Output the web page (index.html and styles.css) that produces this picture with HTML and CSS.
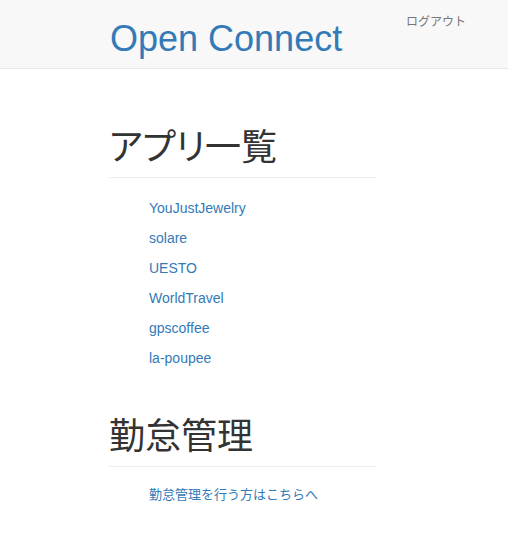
FILE: index.html
```html
<!DOCTYPE html>
<html lang="ja">
<head>
<meta charset="utf-8">
<title>Open Connect</title>
<link rel="stylesheet" href="styles.css">
</head>
<body>
<header class="navbar">
  <a class="brand" href="#">Open Connect</a>
  <a class="logout" href="#">ログアウト</a>
</header>
<main class="container">
  <section class="section">
    <h1 class="page-header kana">アプリ一覧</h1>
    <ul class="app-list">
      <li><a href="#">YouJustJewelry</a></li>
      <li><a href="#">solare</a></li>
      <li><a href="#">UESTO</a></li>
      <li><a href="#">WorldTravel</a></li>
      <li><a href="#">gpscoffee</a></li>
      <li><a href="#">la-poupee</a></li>
    </ul>
  </section>
  <section class="section second">
    <h1 class="page-header">勤怠管理</h1>
    <ul class="kintai-list">
      <li><a href="#">勤怠管理を行う方はこちらへ</a></li>
    </ul>
  </section>
</main>
</body>
</html>
```
FILE: styles.css
```css
* { box-sizing: border-box; }
html, body { margin: 0; padding: 0; background: #fff; }
body {
  font-family: "Liberation Sans", "Noto Sans CJK JP", sans-serif;
  font-size: 14px;
  line-height: 20px;
  color: #333;
}
a { text-decoration: none; color: #337ab7; }

.navbar {
  display: flex;
  align-items: flex-start;
  height: 69px;
  background: #f8f8f8;
  border-bottom: 1px solid #e7e7e7;
}
.brand {
  margin-left: 110px;
  padding-top: 21px;
  font-size: 36px;
  line-height: 36px;
  color: #337ab7;
}
.logout {
  margin-left: auto;
  margin-right: 42px;
  padding-top: 12px;
  font-size: 12px;
  line-height: 20px;
  color: #777;
}

.container {
  margin-left: 109px;
  width: 267px;
  display: flex;
  flex-direction: column;
}
.section { display: flex; flex-direction: column; }
.page-header {
  margin: 59px 0 0;
  padding-bottom: 9px;
  border-bottom: 1px solid #eee;
  font-size: 36px;
  line-height: 40px;
  font-weight: 400;
  color: #333;
}
.kana { font-feature-settings: "palt"; }
.second .page-header { margin-top: 44px; }

.app-list {
  list-style: none;
  margin: 15px 0 0;
  padding: 0 0 0 40px;
}
.app-list li { padding: 5px 0; }

.kintai-list {
  list-style: none;
  margin: 18px 0 0;
  padding: 0 0 0 40px;
}
.kintai-list li { font-size: 13px; }
```
